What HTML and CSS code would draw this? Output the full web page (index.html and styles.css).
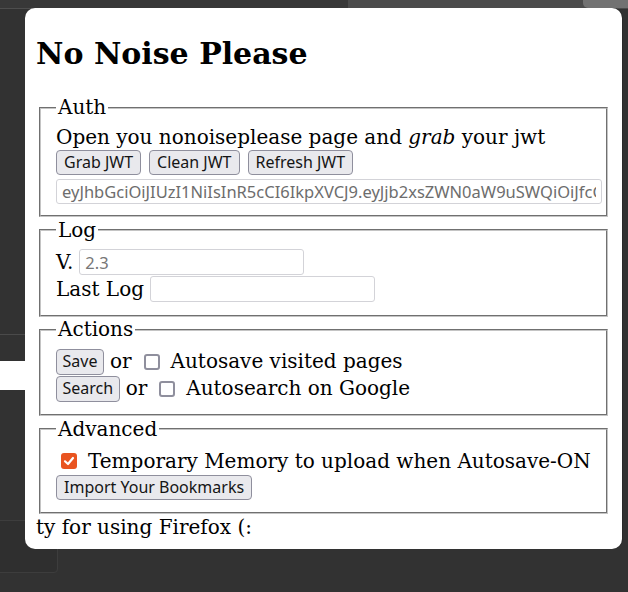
FILE: index.html
```html
<!DOCTYPE html>
<html>
<head>
<meta charset="utf-8">
<link rel="stylesheet" href="styles.css">
</head>
<body>
<div class="desktop">
  <div class="topbar"><div class="topbar-left"></div><div class="topbar-right"></div></div>
  <div class="side-line"></div>
  <div class="side-field"></div>
  <div class="side-panel"></div>

  <div class="popup">
    <h1 class="title">No Noise Please</h1>

    <fieldset class="group">
      <legend class="legend">Auth</legend>
      <div class="line">Open you nonoiseplease page and <i>grab</i> your jwt</div>
      <div class="btnrow wide">
        <button class="btn">Grab JWT</button>
        <button class="btn">Clean JWT</button>
        <button class="btn">Refresh JWT</button>
      </div>
      <input class="field jwt" type="text" value="eyJhbGciOiJIUzI1NiIsInR5cCI6IkpXVCJ9.eyJjb2xsZWN0aW9uSWQiOiJfcGJfdXNlcnNfYXV0aF8iLCJleHAiOjE2">
    </fieldset>

    <fieldset class="group">
      <legend class="legend">Log</legend>
      <div class="row">
        <span>V.</span>
        <input class="field short" type="text" placeholder="2.3">
      </div>
      <div class="row">
        <span>Last Log</span>
        <input class="field short" type="text">
      </div>
    </fieldset>

    <fieldset class="group">
      <legend class="legend">Actions</legend>
      <div class="row">
        <button class="btn small">Save</button>
        <span>or</span>
        <span class="check"></span>
        <span>Autosave visited pages</span>
      </div>
      <div class="row">
        <button class="btn small">Search</button>
        <span>or</span>
        <span class="check"></span>
        <span>Autosearch on Google</span>
      </div>
    </fieldset>

    <fieldset class="group">
      <legend class="legend">Advanced</legend>
      <div class="row adv">
        <span class="check checked"><svg viewBox="0 0 16 16" width="16" height="16"><path d="M4 8.3 L7 11 L12 5" fill="none" stroke="#fff" stroke-width="2.2" stroke-linecap="round" stroke-linejoin="round"/></svg></span>
        <span>Temporary Memory to upload when Autosave-ON</span>
      </div>
      <div class="btnrow single">
        <button class="btn">Import Your Bookmarks</button>
      </div>
    </fieldset>

    <div class="thanks">ty for using Firefox (:</div>
  </div>
</div>
</body>
</html>
```

FILE: styles.css
```css
html, body {
  margin: 0;
  padding: 0;
}
body {
  width: 628px;
  height: 592px;
  overflow: hidden;
  background: #323232;
  font-family: "DejaVu Serif", serif;
}
.desktop {
  position: relative;
  width: 628px;
  height: 592px;
}
.topbar {
  display: flex;
  height: 9px;
}
.topbar-left {
  width: 348px;
  background: #383838;
  border-bottom: 1px solid #4e4e4e;
  box-sizing: border-box;
}
.topbar-right {
  flex: 1;
  background: #4b4b4b;
  position: relative;
}
.topbar-right::after {
  content: "";
  position: absolute;
  right: 0;
  top: 0;
  width: 45px;
  height: 8px;
  background: #727272;
  border-radius: 0 0 0 5px;
}
.side-line {
  position: absolute;
  left: 0;
  top: 334px;
  width: 25px;
  height: 1px;
  background: #4a4a4a;
}
.side-field {
  position: absolute;
  left: 0;
  top: 361px;
  width: 25px;
  height: 29px;
  background: #fff;
}
.side-panel {
  position: absolute;
  left: -10px;
  top: 520px;
  width: 66px;
  height: 51px;
  border: 1px solid #3d3d3d;
  border-radius: 0 0 4px 0;
  background: #2f2f2f;
}

.popup {
  position: absolute;
  left: 25px;
  top: 8px;
  width: 597px;
  height: 541px;
  background: #fff;
  border-radius: 10px;
  box-sizing: border-box;
  padding: 0 11px;
  color: #000;
  font-size: 20px;
  overflow: hidden;
  box-shadow: 1px 0 0 #2a2a2a;
}
.title {
  margin: 28px 0 24px;
  font-size: 30px;
  line-height: 36px;
  font-weight: bold;
}
.group {
  margin: 1.5px 3px 0;
  padding: 7px 15px 12px;
  border: 2px groove #c4c4c4;
  min-width: 0;
}
.group:first-of-type {
  padding-bottom: 11px;
}
.legend {
  padding: 0 2px;
  margin-left: 0;
  line-height: 23px;
}
.line {
  line-height: 23px;
  height: 23px;
}
.btnrow {
  display: flex;
  gap: 7px;
  margin-top: 1px;
}
.btnrow.wide {
  gap: 8px;
}
.btnrow.single {
  margin-top: 0;
}
.btn {
  font-family: "Noto Sans", "Open Sans", sans-serif;
  font-size: 16px;
  height: 25px;
  padding: 0 7px;
  border: 1px solid #8f8f9d;
  border-radius: 4px;
  background: #e9e9ed;
  color: #151515;
  line-height: 23px;
}
.btn.small {
  padding: 0 5.5px;
  height: 26px;
}
.field {
  font-family: "Noto Sans", "Open Sans", sans-serif;
  font-size: 16.5px;
  height: 25px;
  box-sizing: border-box;
  border: 1px solid #d3d3d8;
  border-radius: 3px;
  padding: 0 5px;
  color: #6d6d6d;
  background: #fff;
}
.field::placeholder {
  color: #777;
}
.jwt {
  display: block;
  width: 546px;
  margin-top: 4px;
}
.short {
  width: 225px;
  height: 26px;
}
.row {
  display: flex;
  align-items: center;
  gap: 6px;
  height: 27px;
  line-height: 23px;
}
.check {
  display: inline-block;
  width: 16px;
  height: 16px;
  box-sizing: border-box;
  border: 2px solid #8f8f9d;
  border-radius: 3px;
  margin: 0 5px 0 6px;
  background: #fff;
}
.check.checked {
  border: none;
  background: #e95420;
  margin: 0 5px 0 5px;
}
.check svg {
  display: block;
}
.adv {
  margin-top: 0;
}
.thanks {
  margin-top: 2px;
  line-height: 23px;
}
```
